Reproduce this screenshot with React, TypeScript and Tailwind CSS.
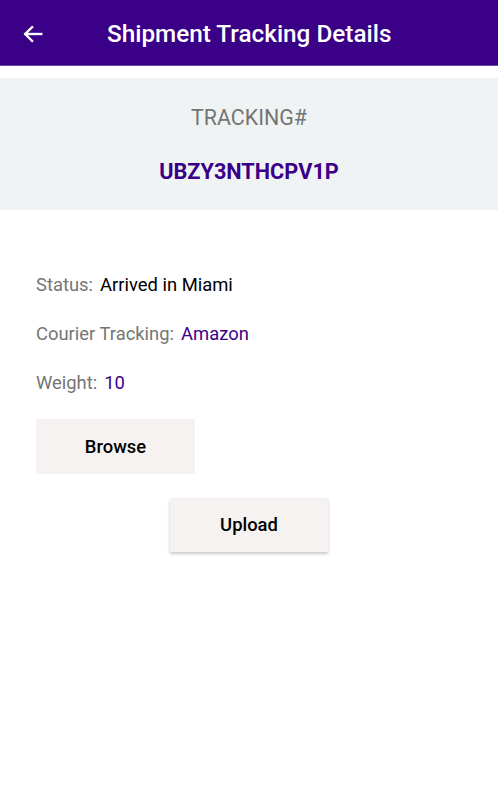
import React from "react";

const Row = ({ label, value, valueClass }: { label: string; value: string; valueClass: string }) => (
  <div className="flex h-[49px] items-center gap-[7px] text-[18.4px]">
    <span className="text-[#757575]">{label}</span>
    <span className={valueClass}>{value}</span>
  </div>
);

export default function App() {
  return (
    <div className="min-h-[800px] bg-white" style={{ fontFamily: "Roboto, 'Noto Sans', sans-serif" }}>
      <header className="flex h-[66px] items-center bg-[#3a0088] border-b border-[#6a4aa8] pt-[3px]">
        <button className="ml-[22px] flex h-[22px] w-[22px] items-center justify-center text-white">
          <svg width="22" height="22" viewBox="0 0 24 24" fill="none" stroke="currentColor" strokeWidth="2.6" strokeLinecap="square">
            <path d="M21 12H4" />
            <path d="M11 4.5 3.5 12l7.5 7.5" />
          </svg>
        </button>
        <h1 className="ml-[63px] text-[24.3px] font-medium text-white">Shipment Tracking Details</h1>
      </header>

      <section className="mt-[12px] flex h-[132px] flex-col items-center bg-[#f0f3f4] pt-[26px]">
        <div className="text-[21.4px] leading-[28px] text-[#757575]">TRACKING#</div>
        <div className="mt-[26px] text-[21.7px] font-bold leading-[28px] text-[#3a0088]">UBZY3NTHCPV1P</div>
      </section>

      <section className="px-[36px] pt-[50px]">
        <Row label="Status:" value="Arrived in Miami" valueClass="text-black" />
        <Row label="Courier Tracking:" value="Amazon" valueClass="text-[#3a0088]" />
        <Row label="Weight:" value="10" valueClass="text-[#3a0088]" />

        <button className="mt-[12px] flex h-[55px] w-[159px] items-center justify-center bg-[#f5f2f1] text-[18.4px] font-medium text-black">
          Browse
        </button>

        <div className="mt-[24px] flex justify-center" style={{ marginLeft: -36, marginRight: -36 }}>
          <button className="flex h-[54px] w-[158px] items-center justify-center bg-[#f5f2f1] text-[18.4px] font-medium text-black shadow-[0_2px_3px_rgba(0,0,0,0.22)]">
            Upload
          </button>
        </div>
      </section>
    </div>
  );
}
